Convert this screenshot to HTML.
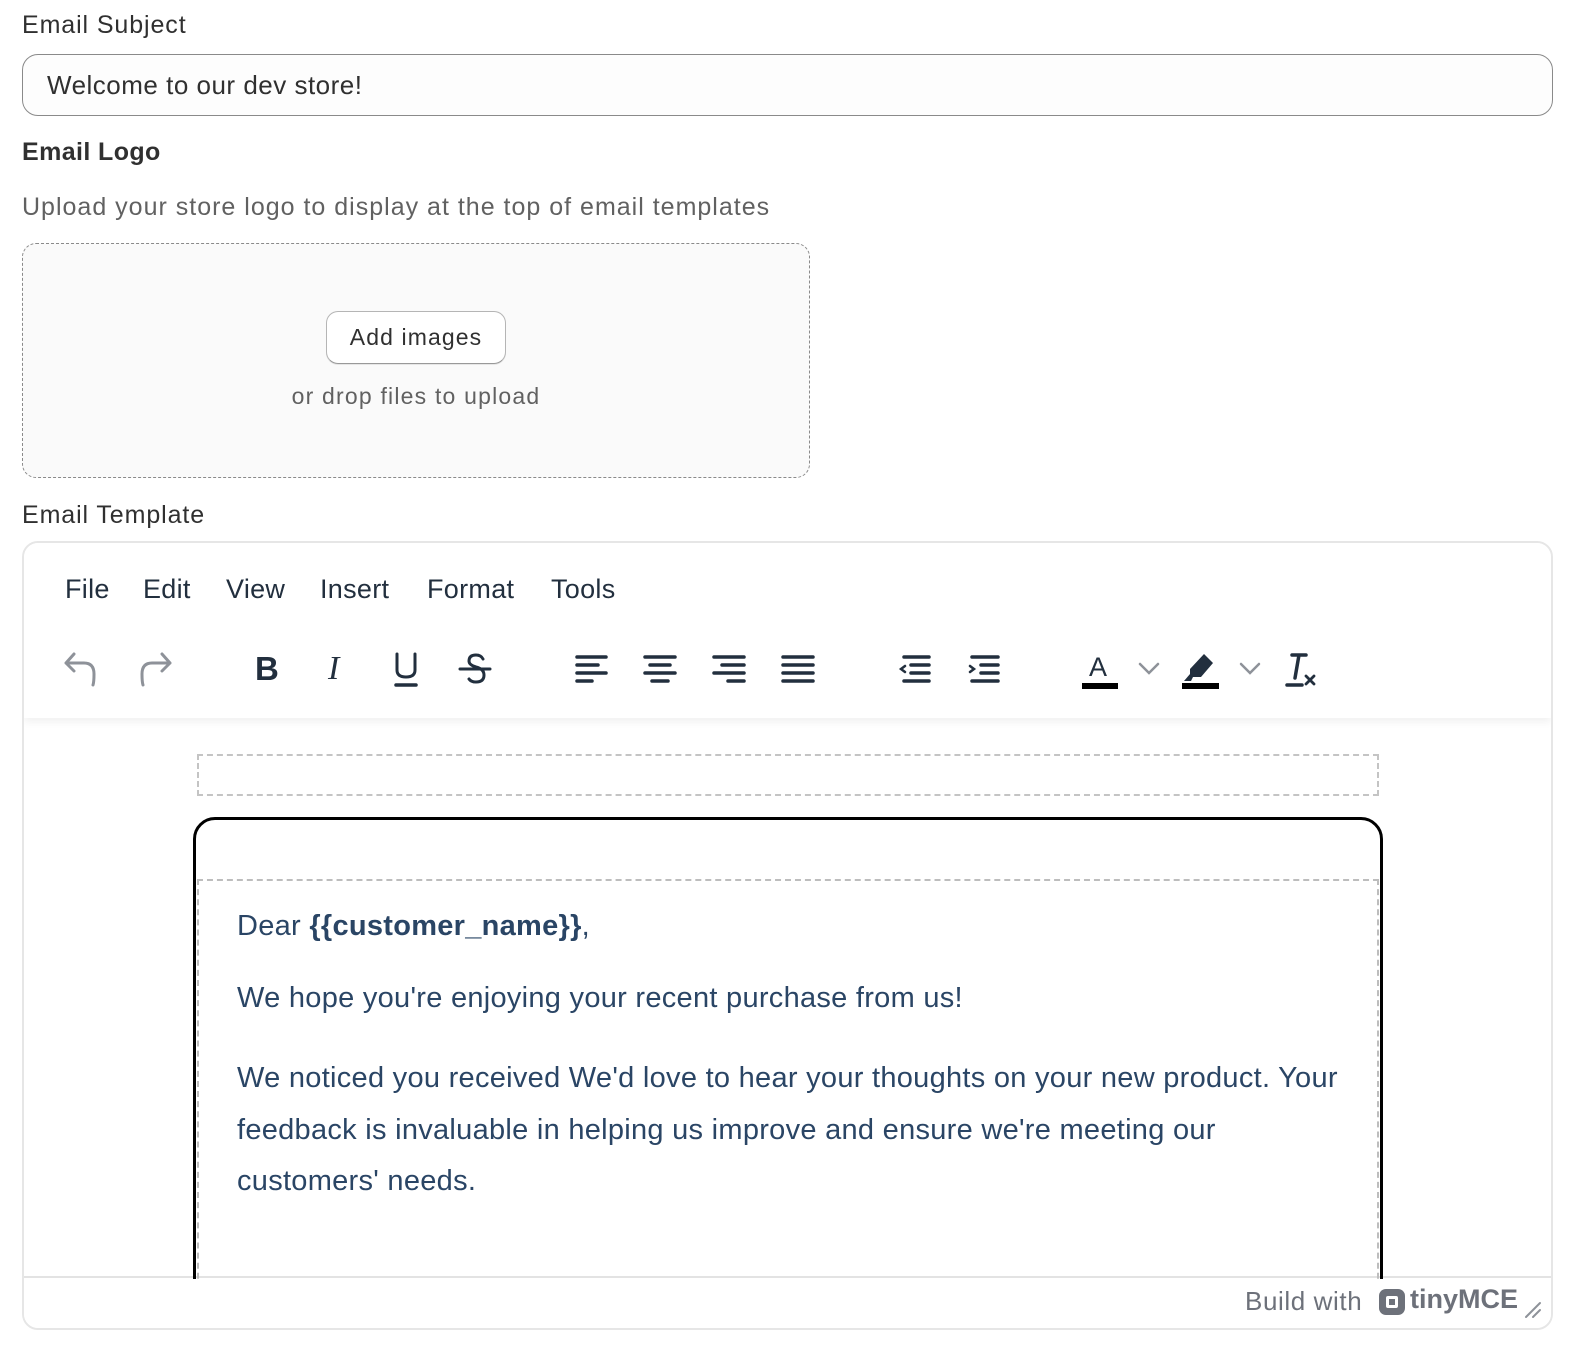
<!DOCTYPE html>
<html><head><meta charset="utf-8"><style>
*{box-sizing:border-box;margin:0;padding:0}
body{width:1590px;height:1354px;background:#fff;font-family:"Liberation Sans",sans-serif;color:#303030;position:relative;overflow:hidden}
.a{position:absolute;white-space:nowrap}
.lbl{font-size:25px;color:#303030;letter-spacing:0.9px}
.menu span{position:absolute;top:574px;font-size:27px;color:#222f3e;letter-spacing:0.3px}
svg.i{position:absolute}
.ct{color:#2a4565;font-size:29px;letter-spacing:0.28px}
</style></head><body>
<div class="a lbl" style="left:22px;top:11px">Email Subject</div>
<div class="a" style="left:22px;top:54px;width:1531px;height:62px;border:1px solid #8a8a8a;border-radius:16px;background:#fdfdfd"></div>
<div class="a" style="left:47px;top:70px;font-size:26px;color:#303030;letter-spacing:0.5px">Welcome to our dev store!</div>
<div class="a" style="left:22px;top:138px;font-size:25px;font-weight:bold;letter-spacing:0.4px">Email Logo</div>
<div class="a" style="left:22px;top:193px;font-size:25px;color:#616161;letter-spacing:1px">Upload your store logo to display at the top of email templates</div>
<div class="a" style="left:22px;top:243px;width:788px;height:235px;border:1px dashed #8a8a8a;border-radius:14px;background:#fafafa"></div>
<div class="a" style="left:326px;top:311px;width:180px;height:53px;border:1px solid #b5b5b5;border-bottom-color:#999;border-radius:12px;background:#fff;box-shadow:0 1px 0 rgba(0,0,0,.08);font-size:23px;line-height:51px;text-align:center;color:#303030;letter-spacing:1.1px">Add images</div>
<div class="a" style="left:22px;width:788px;top:383px;text-align:center;font-size:23px;color:#616161;letter-spacing:1.2px">or drop files to upload</div>
<div class="a lbl" style="left:22px;top:501px">Email Template</div>
<div class="a" style="left:22px;top:541px;width:1531px;height:789px;border:2px solid #e6e6e6;border-radius:16px;overflow:hidden">
 <div style="position:absolute;left:0;top:0;right:0;height:175px;background:#fff;box-shadow:0 4px 8px rgba(0,0,0,.06)"></div>
 <div style="position:absolute;left:0;right:0;top:733px;border-top:2px solid #e3e3e3"></div>
</div>
<div class="menu">
<span style="left:65px">File</span><span style="left:143px">Edit</span><span style="left:226px">View</span><span style="left:320px">Insert</span><span style="left:427px">Format</span><span style="left:551px">Tools</span>
</div>
<svg class="i" style="left:60px;top:650px" width="120" height="40" viewBox="0 0 120 40" fill="none" stroke="#8e9299" stroke-width="3" stroke-linecap="round" stroke-linejoin="round">
<path d="M14 4 L6 13 L14 21 M6 13 H24 Q34 13 34 24 Q34 32 33 35"/>
<path d="M102 4 L110 13 L102 21 M110 13 H92 Q82 13 82 24 Q82 32 83 35"/>
</svg>
<div class="a" style="left:255px;top:650px;font-size:33px;font-weight:bold;color:#222f3e">B</div>
<div class="a" style="left:328px;top:650px;font-size:34px;font-style:italic;font-family:'Liberation Serif',serif;color:#222f3e">I</div>
<svg class="i" style="left:390px;top:650px" width="110" height="40" viewBox="0 0 110 40" fill="none" stroke="#222f3e" stroke-width="3" stroke-linecap="round">
<path d="M7 4 V20 Q7 27 16 27 Q25 27 25 20 V4"/><path d="M6 35 H26" stroke-width="3.5"/>
<path d="M93 9 Q91 5 86 5 Q79 5 79 11 Q79 15 86 17 Q94 19 94 25 Q94 32 86 32 Q81 32 79 29"/><path d="M70 19 H100"/>
</svg>
<svg class="i" style="left:570px;top:650px" width="260" height="40" viewBox="0 0 260 40" stroke="#222f3e" stroke-width="3.5" stroke-linecap="round">
<path d="M7 7H36M7 15H28M7 23H36M7 31H22"/>
<path d="M75 7H105M80 15H100M75 23H105M82 31H98"/>
<path d="M144 7H174M152 15H174M144 23H174M158 31H174"/>
<path d="M213 7H243M213 15H243M213 23H243M213 31H243"/>
</svg>
<svg class="i" style="left:895px;top:650px" width="110" height="40" viewBox="0 0 110 40" fill="none" stroke="#222f3e" stroke-width="3.5" stroke-linecap="round">
<path d="M9 7H34M16 15H34M16 23H34M9 31H34"/><path d="M10 16L6 19L10 22" stroke-width="2.5"/>
<path d="M77 7H103M86 15H103M86 23H103M77 31H103"/><path d="M75 16L79 19L75 22" stroke-width="2.5"/>
</svg>
<div class="a" style="left:1089px;top:652px;font-size:27px;color:#222f3e">A</div>
<div class="a" style="left:1082px;top:683px;width:36px;height:6px;background:#000"></div>
<svg class="i" style="left:1138px;top:660px" width="130" height="20" viewBox="0 0 130 20" fill="none" stroke="#8e9299" stroke-width="2.5" stroke-linecap="round"><path d="M2 4L11 13L20 4"/><path d="M103 4L112 13L121 4"/></svg>
<svg class="i" style="left:1180px;top:650px" width="40" height="40" viewBox="0 0 40 40"><path d="M24 4 L33 13 L21 27 L13 27 L11 31 L4 31 L10 24 L10 19 Z" fill="#222f3e"/><rect x="2" y="33" width="37" height="6" fill="#000"/></svg>
<svg class="i" style="left:1284px;top:650px" width="40" height="40" viewBox="0 0 40 40" fill="none" stroke="#222f3e" stroke-width="3.5" stroke-linecap="round"><path d="M8 5H22M15 5L11 28M3 35H18"/><path d="M22 26L30 34M30 26L22 34" stroke-width="2.8"/></svg>
<div class="a" style="left:197px;top:754px;width:1182px;height:42px;border:2px dashed #c4c4c4"></div>
<div class="a" style="left:193px;top:817px;width:1190px;height:480px;border:3.5px solid #000;border-radius:22px 22px 0 0"></div>
<div class="a" style="left:197px;top:879px;width:1182px;height:420px;border:2px dashed #bdbdbd;border-bottom:none"></div>
<div class="a ct" style="left:237px;top:910px">Dear <b>{{customer_name}}</b>,</div>
<div class="a ct" style="left:237px;top:982px">We hope you're enjoying your recent purchase from us!</div>
<div class="a ct" style="left:237px;top:1053px;line-height:51.5px;white-space:normal;width:1115px">We noticed you received We'd love to hear your thoughts on your new product. Your feedback is invaluable in helping us improve and ensure we're meeting our customers' needs.</div>
<div class="a" style="left:24px;top:1279px;width:1527px;height:49px;background:#fff;border-radius:0 0 14px 14px"></div>
<div class="a" style="left:1245px;top:1286px;font-size:26px;color:#6d717a;letter-spacing:0.6px">Build with</div>
<svg class="i" style="left:1378px;top:1288px" width="28" height="28" viewBox="0 0 28 28"><rect x="1" y="1" width="26" height="26" rx="7" fill="#6d717a"/><rect x="8" y="8" width="12" height="12" rx="2" fill="#fff"/><rect x="11" y="11" width="6" height="6" fill="#6d717a"/></svg>
<div class="a" style="left:1410px;top:1284px;font-size:27px;font-weight:bold;color:#6d717a">tinyMCE</div>
<svg class="i" style="left:1522px;top:1300px" width="22" height="20" viewBox="0 0 22 20" stroke="#8e9299" stroke-width="2" stroke-linecap="round"><path d="M4 17L18 3M11 17L18 10"/></svg>
</body></html>
